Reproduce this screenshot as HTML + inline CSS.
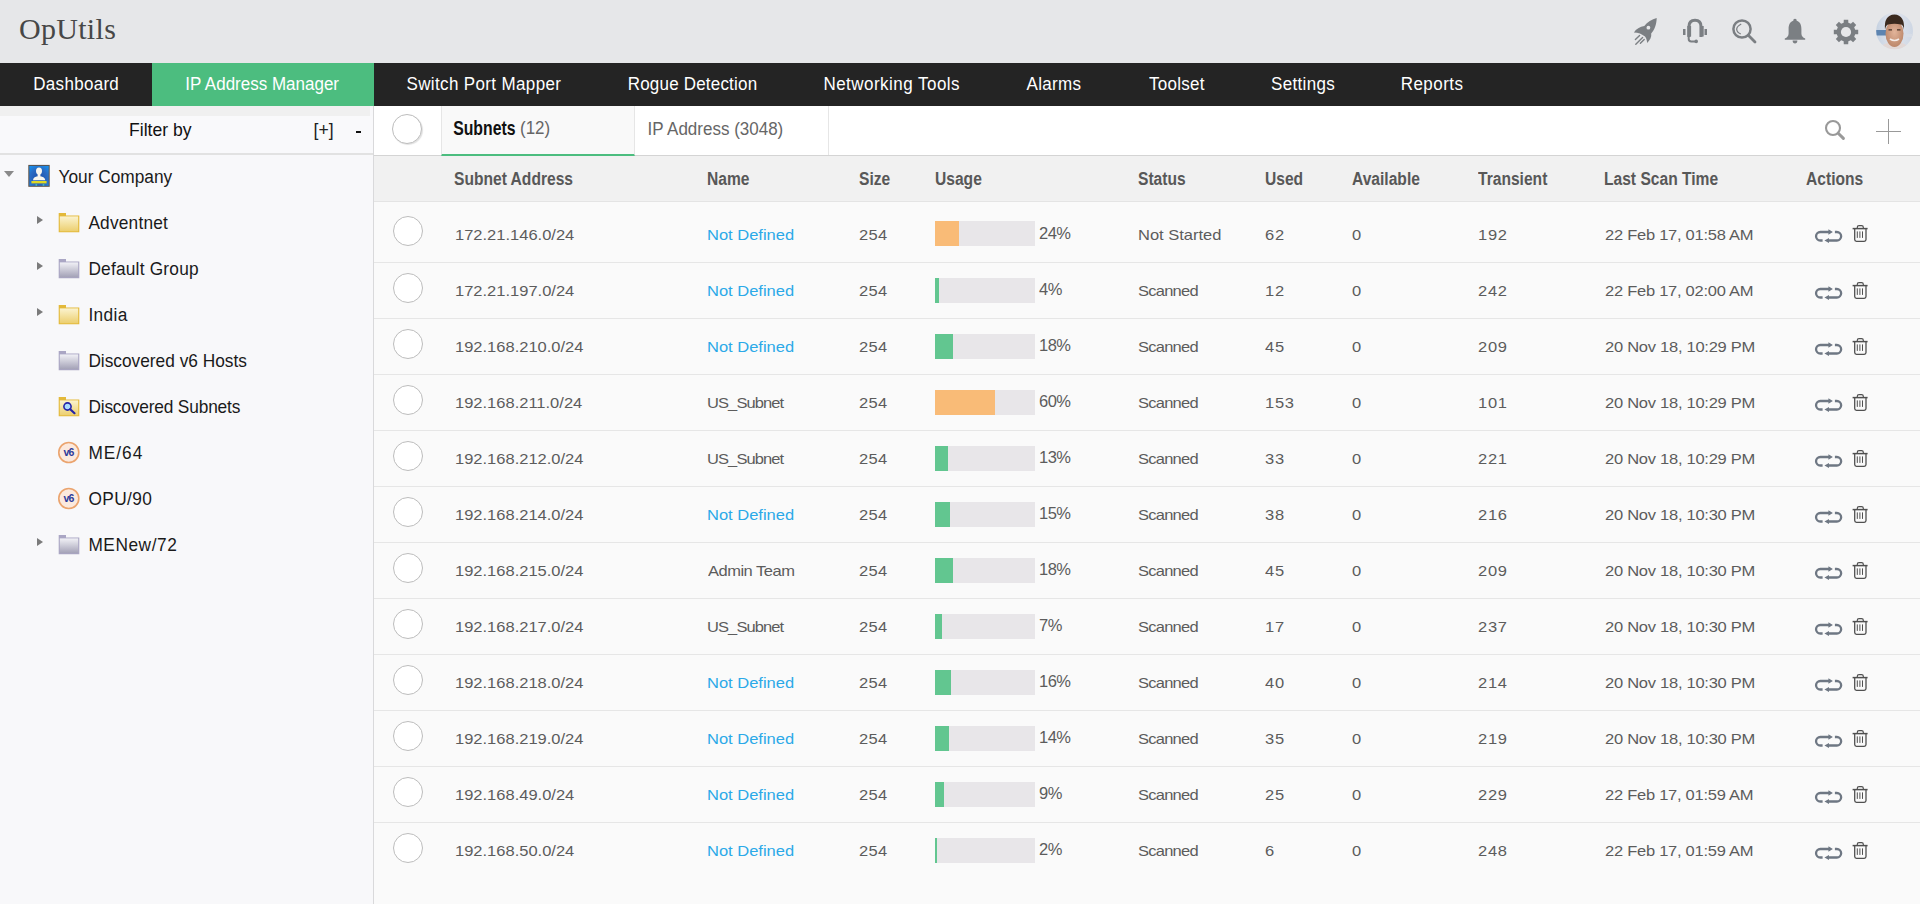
<!DOCTYPE html>
<html><head><meta charset="utf-8">
<style>
*{margin:0;padding:0;box-sizing:border-box}
html,body{width:1920px;height:904px;overflow:hidden;background:#fafafa;font-family:"Liberation Sans",sans-serif}
#top{position:absolute;left:0;top:0;width:1920px;height:63px;background:#e6e7e9}
#logo{position:absolute;left:19px;top:12px;font-family:"Liberation Serif",serif;font-size:30px;color:#474747;line-height:34px;white-space:nowrap;letter-spacing:0.3px}
#nav{position:absolute;left:0;top:63px;width:1920px;height:43px;background:#242424}
#nav .it{position:absolute;top:0;height:43px;color:#fff;font-size:17px;white-space:nowrap}
#nav .it span{position:absolute;left:0;top:10.3px;line-height:20px;transform:scaleY(1.125);transform-origin:0 0}
#nav .act span{left:33.3px}
#nav .act{background:#4cbd7f}
#side{position:absolute;left:0;top:106px;width:374px;height:798px;background:#f8f8fa;border-right:1px solid #d9d9db}
#strip{position:absolute;left:0;top:106px;width:370px;height:10px;background:#f0f0f0}
#filter{position:absolute;left:0;top:116px;width:373px;height:39px;background:#f9f9fb;border-bottom:2px solid #e2e2e2}
.st{position:absolute;font-size:17.6px;color:#111;white-space:nowrap;line-height:20px;transform:scaleY(1.05);transform-origin:0 0}
.tree{position:absolute;font-size:17.3px;color:#1a1a1a;white-space:nowrap;line-height:20px;transform:scaleY(1.08);transform-origin:0 0}
.tri{position:absolute;width:0;height:0;border-top:4.5px solid transparent;border-bottom:4.5px solid transparent;border-left:6px solid #7b7b7b}
.trid{position:absolute;width:0;height:0;border-left:5px solid transparent;border-right:5px solid transparent;border-top:6.5px solid #8a8a8a}
#tabs{position:absolute;left:374px;top:106px;width:1546px;height:50px;background:#fff;border-bottom:1px solid #d4d4d4}
#tab1{position:absolute;left:441px;top:106px;width:194px;height:50px;background:#f9f9f9;border-left:1px solid #e6e6e6;border-right:1px solid #e6e6e6;border-bottom:2px solid #4cbd7f}
#tab2b{position:absolute;left:828px;top:106px;width:1px;height:49px;background:#e6e6e6}
.tabt{position:absolute;font-size:17px;white-space:nowrap;line-height:20px;transform:scaleY(1.15);transform-origin:0 0}
#thead{position:absolute;left:374px;top:156px;width:1546px;height:46px;background:#f1f1f1;border-bottom:1px solid #e4e4e4}
.th{position:absolute;font-size:15.6px;font-weight:700;color:#585858;white-space:nowrap;line-height:20px;transform:scaleY(1.12);transform-origin:0 0}
.td{position:absolute;font-size:16.5px;color:#5c5c5c;white-space:nowrap;line-height:20px;transform:scaleY(0.94);transform-origin:0 16px}
.lnk{color:#2ba9e8}
.cb{position:absolute;width:30px;height:30px;border-radius:50%;border:1px solid #bdbdbd;background:#fff}
.bar{position:absolute;left:935px;width:100px;height:25px;background:#e8e6e9}
.bar i{position:absolute;left:0;top:0;height:25px;display:block}
.sep{position:absolute;left:374px;width:1546px;height:1px;background:#e6e6e6}
.ic{position:absolute;overflow:visible}
</style></head><body>
<svg width="0" height="0" style="position:absolute">
<defs>
 <symbol id="act" viewBox="0 0 64 32">
  <g fill="none" stroke="#6e7783" stroke-width="2.3">
   <path d="M14.6 22.5 H12.3 A4.25 4.25 0 0 1 12.3 14 H21"/>
   <path d="M26.9 14 H28.9 A4.25 4.25 0 0 1 28.9 22.5 H20.5"/>
  </g>
  <path d="M20.4 11.2 L24.9 14 L20.4 16.8 Z M21 20.1 L16.4 22.6 L21 25.1 Z" fill="#6e7783"/>
  <g fill="none" stroke="#505050">
   <path d="M49.3 10.3 V9.2 Q49.3 7.6 51 7.6 H53.6 Q55.3 7.6 55.3 9.2 V10.3" stroke-width="1.2"/>
   <path d="M44.6 10.6 H59.6" stroke-width="1.5"/>
   <path d="M46.7 10.8 V21.6 Q46.7 23.4 48.5 23.4 H56.2 Q58 23.4 58 21.6 V10.8" stroke-width="1.3"/>
   <path d="M49.3 13.4 V19.9 M51.9 13.4 V19.9 M54.5 13.4 V19.9" stroke-width="1"/>
  </g>
 </symbol>
 <linearGradient id="gy" x1="0" y1="0" x2="0" y2="1"><stop offset="0" stop-color="#fbf3cf"/><stop offset="1" stop-color="#eccf6f"/></linearGradient>
 <linearGradient id="gg" x1="0" y1="0" x2="0" y2="1"><stop offset="0" stop-color="#f1f1f6"/><stop offset="1" stop-color="#a3a1b6"/></linearGradient>
 <linearGradient id="gb" x1="0" y1="0" x2="0" y2="1"><stop offset="0" stop-color="#3d8be0"/><stop offset="1" stop-color="#1f5fb8"/></linearGradient>
 <symbol id="fy" viewBox="0 0 22 21">
  <path d="M0.7 20.3 V0.9 H8 V3.4 H21.3 V20.3 Z" fill="#e3b93a"/>
  <rect x="1.8" y="4.4" width="18.4" height="14.9" fill="url(#gy)"/>
 </symbol>
 <symbol id="fg" viewBox="0 0 22 21">
  <path d="M0.7 20.3 V0.9 H8 V3.4 H21.3 V20.3 Z" fill="#aaa6c4"/>
  <rect x="1.8" y="4.4" width="18.4" height="14.9" fill="url(#gg)"/>
 </symbol>
</defs></svg>
<div id="top"></div>
<div id="logo">OpUtils</div>
<svg class="ic" style="left:1630px;top:14px" width="32" height="34" viewBox="0 0 32 34">
 <path d="M26.7 4.1 C22 5.2 17.2 8.2 14.3 12 C10 12.6 6 15 3.9 18.4 C8 18.6 12.2 19.8 15 22.6 C16.6 24.6 17 27 17.1 28.9 C20 26.2 21.8 23 21.2 19.6 C24.5 16 26.6 10.5 26.7 4.1 Z" fill="#7b7f83"/>
 <circle cx="18.4" cy="13.7" r="1.9" fill="#e6e7e9"/>
 <path d="M9.6 21.4 L5.4 25.6 M12.6 23.4 L5.8 30.2 M14.2 25.4 L10.4 29.2" stroke="#7b7f83" stroke-width="1.4" stroke-linecap="round"/>
</svg>
<svg class="ic" style="left:1680px;top:16px" width="30" height="30" viewBox="0 0 30 30">
 <path d="M9 21 V10.5 Q9 4.3 15 4.3 Q21 4.3 21 10.5 V21" fill="none" stroke="#7b7f83" stroke-width="3"/>
 <rect x="3" y="13" width="2.5" height="6" fill="#7b7f83"/>
 <rect x="24.5" y="13" width="2.5" height="6" fill="#7b7f83"/>
 <rect x="7.3" y="10" width="3.8" height="10.5" fill="#7b7f83"/>
 <rect x="19.9" y="10" width="3.8" height="10.5" fill="#7b7f83"/>
 <path d="M8.7 20 V23 Q8.7 25.4 11.2 25.4 H15.5" fill="none" stroke="#7b7f83" stroke-width="2"/>
 <circle cx="16.2" cy="25.4" r="1.8" fill="#7b7f83"/>
</svg>
<svg class="ic" style="left:1730px;top:17px" width="30" height="30" viewBox="0 0 30 30">
 <circle cx="12" cy="12" r="8.6" fill="none" stroke="#7b7f83" stroke-width="2.5"/>
 <path d="M18.3 18.3 L25 25" stroke="#7b7f83" stroke-width="2.8" stroke-linecap="round"/>
 <path d="M11.2 7 Q6.5 9.5 6.7 12.5 Q7 15.5 10.8 17" fill="none" stroke="#7b7f83" stroke-width="1.3"/>
</svg>
<svg class="ic" style="left:1784px;top:18px" width="22" height="27" viewBox="0 0 22 27">
 <path d="M11 0.8 C12.3 0.8 12.7 1.8 12.7 2.7 C16.2 3.8 17.4 7 17.4 11 V15.5 C17.4 18 18.8 19.6 21.2 20.6 V21.8 H0.8 V20.6 C3.2 19.6 4.6 18 4.6 15.5 V11 C4.6 7 5.8 3.8 9.3 2.7 C9.3 1.8 9.7 0.8 11 0.8 Z" fill="#7b7f83"/>
 <path d="M8.6 22.6 H13.4 C13.4 24.6 12.4 25.4 11 25.4 C9.6 25.4 8.6 24.6 8.6 22.6 Z" fill="#7b7f83"/>
</svg>
<svg class="ic" style="left:1832px;top:18px" width="28" height="28" viewBox="-14 -14 28 28">
 <path d="M-2.35 -9.20 L-2.22 -12.20 L2.22 -12.20 L2.35 -9.20 L4.85 -8.17 L7.06 -10.20 L10.20 -7.06 L8.17 -4.85 L9.20 -2.35 L12.20 -2.22 L12.20 2.22 L9.20 2.35 L8.17 4.85 L10.20 7.06 L7.06 10.20 L4.85 8.17 L2.35 9.20 L2.22 12.20 L-2.22 12.20 L-2.35 9.20 L-4.85 8.17 L-7.06 10.20 L-10.20 7.06 L-8.17 4.85 L-9.20 2.35 L-12.20 2.22 L-12.20 -2.22 L-9.20 -2.35 L-8.17 -4.85 L-10.20 -7.06 L-7.06 -10.20 L-4.85 -8.17 Z" fill="#7b7f83"/>
 <circle cx="0" cy="0" r="5.1" fill="#e6e7e9"/>
</svg>
<svg class="ic" style="left:1875px;top:12px" width="39" height="39" viewBox="0 0 39 39">
 <defs>
  <clipPath id="av"><circle cx="19.6" cy="18.9" r="18.4"/></clipPath>
  <linearGradient id="avbg" x1="0" y1="0" x2="1" y2="0"><stop offset="0" stop-color="#c3d0e0"/><stop offset="0.45" stop-color="#e3e6ee"/><stop offset="1" stop-color="#cdd6e3"/></linearGradient>
  <radialGradient id="avf" cx="0.5" cy="0.45" r="0.6"><stop offset="0" stop-color="#e2b49a"/><stop offset="1" stop-color="#b98366"/></radialGradient>
 </defs>
 <g clip-path="url(#av)">
  <rect width="39" height="39" fill="url(#avbg)"/>
  <rect x="0" y="18" width="11" height="5.5" fill="#5d84b0"/>
  <rect x="27" y="22" width="12" height="3" fill="#d8dde6"/>
  <path d="M4 39 Q6 30 19.5 30 Q33 30 35 39 Z" fill="#e2d8d6"/>
  <ellipse cx="19.5" cy="21.5" rx="9" ry="13.5" fill="url(#avf)"/>
  <path d="M10 18 Q8.5 3 19.5 2.5 Q30 3 29 18 Q28.5 13 26 12.5 Q19.5 11 13 12.5 Q10.5 13.5 10 18 Z" fill="#3b2a1f"/>
  <path d="M13.5 17.8 H17 M22 17.8 H25.5" stroke="#4a3528" stroke-width="1.3"/>
  <path d="M15 27 Q19.5 30 24 27" stroke="#f4ece8" stroke-width="1.6" fill="none"/>
 </g>
</svg>
<div id="nav">
<div class="it" style="left:0;width:152px"><span style="left:33.3px;letter-spacing:0.29px">Dashboard</span></div>
<div class="it act" style="left:152px;width:222px"><span>IP Address Manager</span></div>
<div class="it" style="left:406.5px"><span style="letter-spacing:0.36px">Switch Port Mapper</span></div>
<div class="it" style="left:627.7px"><span style="letter-spacing:0.2px">Rogue Detection</span></div>
<div class="it" style="left:823.4px"><span style="letter-spacing:0.47px">Networking Tools</span></div>
<div class="it" style="left:1026.6px"><span style="letter-spacing:0.28px">Alarms</span></div>
<div class="it" style="left:1149px"><span style="letter-spacing:0.27px">Toolset</span></div>
<div class="it" style="left:1271px"><span style="letter-spacing:0.34px">Settings</span></div>
<div class="it" style="left:1400.7px"><span style="letter-spacing:0.45px">Reports</span></div>
</div>
<div id="side"></div><div id="strip"></div><div id="filter"></div>
<div class="st" style="left:129px;top:119px">Filter by</div>
<div class="st" style="left:313.5px;top:119px;color:#222">[+]</div>
<div style="position:absolute;left:355.5px;top:131px;width:5.5px;height:2px;background:#111"></div>
<div class="trid" style="left:4px;top:171px"></div>
<svg class="ic" style="left:27px;top:164px" width="24" height="24" viewBox="0 0 24 24">
 <defs><radialGradient id="gbr" cx="0.5" cy="0.6" r="0.75"><stop offset="0" stop-color="#1d4fa8"/><stop offset="0.6" stop-color="#2a6cc4"/><stop offset="1" stop-color="#1592f0"/></radialGradient></defs>
 <rect x="1.3" y="0.9" width="21.4" height="21.9" fill="#5b5048"/>
 <rect x="2.3" y="1.9" width="19.4" height="19.9" fill="url(#gbr)"/>
 <ellipse cx="12" cy="7.1" rx="3" ry="3.5" fill="#f8f6ee"/>
 <rect x="10.6" y="9" width="2.8" height="4" fill="#f8f6ee"/>
 <path d="M6 16.2 Q6.3 12.4 12 12.2 Q17.7 12.4 18.3 16.2 Z" fill="#f8f6ee"/>
 <rect x="4.4" y="17" width="15.2" height="2.4" fill="#e0d820"/>
 <rect x="8.5" y="20" width="1.6" height="1.8" fill="#48b8b0"/><rect x="15.7" y="20" width="1.6" height="1.8" fill="#48b8b0"/>
</svg>
<div class="tree" style="left:58.5px;top:165.5px">Your Company</div>
<div class="tri" style="left:37px;top:216px"></div>
<svg class="ic" style="left:58px;top:212px" width="22" height="21"><use href="#fy"/></svg>
<div class="tree" style="left:88.4px;top:211.5px;letter-spacing:0.2px">Adventnet</div>
<div class="tri" style="left:37px;top:262px"></div>
<svg class="ic" style="left:58px;top:258px" width="22" height="21"><use href="#fg"/></svg>
<div class="tree" style="left:88.4px;top:257.5px;letter-spacing:0.22px">Default Group</div>
<div class="tri" style="left:37px;top:308px"></div>
<svg class="ic" style="left:58px;top:304px" width="22" height="21"><use href="#fy"/></svg>
<div class="tree" style="left:88.4px;top:303.5px;letter-spacing:0.4px">India</div>
<svg class="ic" style="left:58px;top:350px" width="22" height="21"><use href="#fg"/></svg>
<div class="tree" style="left:88.4px;top:349.5px;letter-spacing:0px">Discovered v6 Hosts</div>
<svg class="ic" style="left:58px;top:396px" width="22" height="21" viewBox="0 0 22 21">
 <use href="#fy"/>
 <circle cx="9.5" cy="10.5" r="3.6" fill="#a8dcff" stroke="#2424a8" stroke-width="1.6"/>
 <path d="M12.2 13.2 L16.5 17.2" stroke="#2424a8" stroke-width="2.2" stroke-linecap="round"/>
</svg>
<div class="tree" style="left:88.4px;top:395.5px;letter-spacing:-0.16px">Discovered Subnets</div>
<svg class="ic" style="left:57px;top:441px" width="23" height="23" viewBox="0 0 23 23">
 <circle cx="11.8" cy="11.5" r="10" fill="#fbe9de" stroke="#eba46e" stroke-width="1.6"/>
 <text x="11.6" y="15.2" font-family="Liberation Sans" font-size="10.5" font-weight="700" fill="#2b3a9a" text-anchor="middle" letter-spacing="-0.8">v6</text>
</svg>
<div class="tree" style="left:88.4px;top:441.5px;letter-spacing:1.0px">ME/64</div>
<svg class="ic" style="left:57px;top:487px" width="23" height="23" viewBox="0 0 23 23">
 <circle cx="11.8" cy="11.5" r="10" fill="#fbe9de" stroke="#eba46e" stroke-width="1.6"/>
 <text x="11.6" y="15.2" font-family="Liberation Sans" font-size="10.5" font-weight="700" fill="#2b3a9a" text-anchor="middle" letter-spacing="-0.8">v6</text>
</svg>
<div class="tree" style="left:88.4px;top:487.5px;letter-spacing:0.4px">OPU/90</div>
<div class="tri" style="left:37px;top:538px"></div>
<svg class="ic" style="left:58px;top:534px" width="22" height="21"><use href="#fg"/></svg>
<div class="tree" style="left:88.4px;top:533.5px;letter-spacing:0.55px">MENew/72</div>
<div id="tabs"></div><div id="tab1"></div><div id="tab2b"></div>
<div class="cb" style="left:392px;top:114px;box-shadow:1px 1px 1px rgba(0,0,0,0.12)"></div>
<div class="tabt" style="left:453.2px;top:115.6px;font-weight:700;font-size:15.8px;color:#111;transform:scaleY(1.28)">Subnets</div>
<div class="tabt" style="left:520px;top:116.8px;color:#666;transform:scaleY(1.12)">(12)</div>
<div class="tabt" style="left:647.5px;top:118px;color:#666;transform:scaleY(1.1)">IP Address (3048)</div>
<svg class="ic" style="left:1820px;top:115px" width="30" height="30" viewBox="0 0 30 30">
 <circle cx="13" cy="13" r="7" fill="none" stroke="#999" stroke-width="2.1"/>
 <path d="M18.2 18.2 L23.4 23.4" stroke="#999" stroke-width="3" stroke-linecap="round"/>
</svg>
<div style="position:absolute;left:1888px;top:119px;width:1px;height:25px;background:#999"></div>
<div style="position:absolute;left:1876px;top:131px;width:25px;height:1px;background:#999"></div>
<div id="thead"></div>
<div class="th" style="left:454px;top:167.7px">Subnet Address</div>
<div class="th" style="left:707px;top:167.7px">Name</div>
<div class="th" style="left:859px;top:167.7px">Size</div>
<div class="th" style="left:935px;top:167.7px">Usage</div>
<div class="th" style="left:1138px;top:167.7px">Status</div>
<div class="th" style="left:1265px;top:167.7px">Used</div>
<div class="th" style="left:1352px;top:167.7px">Available</div>
<div class="th" style="left:1478px;top:167.7px">Transient</div>
<div class="th" style="left:1604px;top:167.7px">Last Scan Time</div>
<div class="th" style="left:1806px;top:167.7px">Actions</div>
<div class="sep" style="top:262px"></div>
<div class="cb" style="left:393px;top:216px"></div>
<div class="td" style="left:455px;top:224px">172.21.146.0/24</div>
<div class="td lnk" style="left:707px;top:224px;letter-spacing:0px">Not Defined</div>
<div class="td" style="left:859px;top:224px;letter-spacing:0.3px">254</div>
<div class="bar" style="top:221px"><i style="width:24px;background:#f9bb77"></i></div>
<div class="td" style="left:1039px;top:223.1px;letter-spacing:-0.5px;transform:scaleY(1.0)">24%</div>
<div class="td" style="left:1138px;top:224px;letter-spacing:0px">Not Started</div>
<div class="td" style="left:1265px;top:224px;letter-spacing:0.7px">62</div>
<div class="td" style="left:1352px;top:224px;letter-spacing:0.7px">0</div>
<div class="td" style="left:1478px;top:224px;letter-spacing:0.7px">192</div>
<div class="td" style="left:1605px;top:224px;letter-spacing:-0.26px">22 Feb 17, 01:58 AM</div>
<svg class="ic" style="left:1808px;top:218px" width="64" height="32"><use href="#act"/></svg>
<div class="sep" style="top:318px"></div>
<div class="cb" style="left:393px;top:273px"></div>
<div class="td" style="left:455px;top:280px">172.21.197.0/24</div>
<div class="td lnk" style="left:707px;top:280px;letter-spacing:0px">Not Defined</div>
<div class="td" style="left:859px;top:280px;letter-spacing:0.3px">254</div>
<div class="bar" style="top:278px"><i style="width:4px;background:#62c690"></i></div>
<div class="td" style="left:1039px;top:279.1px;letter-spacing:-0.5px;transform:scaleY(1.0)">4%</div>
<div class="td" style="left:1138px;top:280px;letter-spacing:-0.75px">Scanned</div>
<div class="td" style="left:1265px;top:280px;letter-spacing:0.7px">12</div>
<div class="td" style="left:1352px;top:280px;letter-spacing:0.7px">0</div>
<div class="td" style="left:1478px;top:280px;letter-spacing:0.7px">242</div>
<div class="td" style="left:1605px;top:280px;letter-spacing:-0.26px">22 Feb 17, 02:00 AM</div>
<svg class="ic" style="left:1808px;top:275px" width="64" height="32"><use href="#act"/></svg>
<div class="sep" style="top:374px"></div>
<div class="cb" style="left:393px;top:329px"></div>
<div class="td" style="left:455px;top:336px">192.168.210.0/24</div>
<div class="td lnk" style="left:707px;top:336px;letter-spacing:0px">Not Defined</div>
<div class="td" style="left:859px;top:336px;letter-spacing:0.3px">254</div>
<div class="bar" style="top:334px"><i style="width:18px;background:#62c690"></i></div>
<div class="td" style="left:1039px;top:335.1px;letter-spacing:-0.5px;transform:scaleY(1.0)">18%</div>
<div class="td" style="left:1138px;top:336px;letter-spacing:-0.75px">Scanned</div>
<div class="td" style="left:1265px;top:336px;letter-spacing:0.7px">45</div>
<div class="td" style="left:1352px;top:336px;letter-spacing:0.7px">0</div>
<div class="td" style="left:1478px;top:336px;letter-spacing:0.7px">209</div>
<div class="td" style="left:1605px;top:336px;letter-spacing:-0.26px">20 Nov 18, 10:29 PM</div>
<svg class="ic" style="left:1808px;top:331px" width="64" height="32"><use href="#act"/></svg>
<div class="sep" style="top:430px"></div>
<div class="cb" style="left:393px;top:385px"></div>
<div class="td" style="left:455px;top:392px">192.168.211.0/24</div>
<div class="td" style="left:707px;top:392px;letter-spacing:-0.9px">US_Subnet</div>
<div class="td" style="left:859px;top:392px;letter-spacing:0.3px">254</div>
<div class="bar" style="top:390px"><i style="width:60px;background:#f9bb77"></i></div>
<div class="td" style="left:1039px;top:391.1px;letter-spacing:-0.5px;transform:scaleY(1.0)">60%</div>
<div class="td" style="left:1138px;top:392px;letter-spacing:-0.75px">Scanned</div>
<div class="td" style="left:1265px;top:392px;letter-spacing:0.7px">153</div>
<div class="td" style="left:1352px;top:392px;letter-spacing:0.7px">0</div>
<div class="td" style="left:1478px;top:392px;letter-spacing:0.7px">101</div>
<div class="td" style="left:1605px;top:392px;letter-spacing:-0.26px">20 Nov 18, 10:29 PM</div>
<svg class="ic" style="left:1808px;top:387px" width="64" height="32"><use href="#act"/></svg>
<div class="sep" style="top:486px"></div>
<div class="cb" style="left:393px;top:441px"></div>
<div class="td" style="left:455px;top:448px">192.168.212.0/24</div>
<div class="td" style="left:707px;top:448px;letter-spacing:-0.9px">US_Subnet</div>
<div class="td" style="left:859px;top:448px;letter-spacing:0.3px">254</div>
<div class="bar" style="top:446px"><i style="width:13px;background:#62c690"></i></div>
<div class="td" style="left:1039px;top:447.1px;letter-spacing:-0.5px;transform:scaleY(1.0)">13%</div>
<div class="td" style="left:1138px;top:448px;letter-spacing:-0.75px">Scanned</div>
<div class="td" style="left:1265px;top:448px;letter-spacing:0.7px">33</div>
<div class="td" style="left:1352px;top:448px;letter-spacing:0.7px">0</div>
<div class="td" style="left:1478px;top:448px;letter-spacing:0.7px">221</div>
<div class="td" style="left:1605px;top:448px;letter-spacing:-0.26px">20 Nov 18, 10:29 PM</div>
<svg class="ic" style="left:1808px;top:443px" width="64" height="32"><use href="#act"/></svg>
<div class="sep" style="top:542px"></div>
<div class="cb" style="left:393px;top:497px"></div>
<div class="td" style="left:455px;top:504px">192.168.214.0/24</div>
<div class="td lnk" style="left:707px;top:504px;letter-spacing:0px">Not Defined</div>
<div class="td" style="left:859px;top:504px;letter-spacing:0.3px">254</div>
<div class="bar" style="top:502px"><i style="width:15px;background:#62c690"></i></div>
<div class="td" style="left:1039px;top:503.1px;letter-spacing:-0.5px;transform:scaleY(1.0)">15%</div>
<div class="td" style="left:1138px;top:504px;letter-spacing:-0.75px">Scanned</div>
<div class="td" style="left:1265px;top:504px;letter-spacing:0.7px">38</div>
<div class="td" style="left:1352px;top:504px;letter-spacing:0.7px">0</div>
<div class="td" style="left:1478px;top:504px;letter-spacing:0.7px">216</div>
<div class="td" style="left:1605px;top:504px;letter-spacing:-0.26px">20 Nov 18, 10:30 PM</div>
<svg class="ic" style="left:1808px;top:499px" width="64" height="32"><use href="#act"/></svg>
<div class="sep" style="top:598px"></div>
<div class="cb" style="left:393px;top:553px"></div>
<div class="td" style="left:455px;top:560px">192.168.215.0/24</div>
<div class="td" style="left:708px;top:560px;letter-spacing:-0.5px">Admin Team</div>
<div class="td" style="left:859px;top:560px;letter-spacing:0.3px">254</div>
<div class="bar" style="top:558px"><i style="width:18px;background:#62c690"></i></div>
<div class="td" style="left:1039px;top:559.1px;letter-spacing:-0.5px;transform:scaleY(1.0)">18%</div>
<div class="td" style="left:1138px;top:560px;letter-spacing:-0.75px">Scanned</div>
<div class="td" style="left:1265px;top:560px;letter-spacing:0.7px">45</div>
<div class="td" style="left:1352px;top:560px;letter-spacing:0.7px">0</div>
<div class="td" style="left:1478px;top:560px;letter-spacing:0.7px">209</div>
<div class="td" style="left:1605px;top:560px;letter-spacing:-0.26px">20 Nov 18, 10:30 PM</div>
<svg class="ic" style="left:1808px;top:555px" width="64" height="32"><use href="#act"/></svg>
<div class="sep" style="top:654px"></div>
<div class="cb" style="left:393px;top:609px"></div>
<div class="td" style="left:455px;top:616px">192.168.217.0/24</div>
<div class="td" style="left:707px;top:616px;letter-spacing:-0.9px">US_Subnet</div>
<div class="td" style="left:859px;top:616px;letter-spacing:0.3px">254</div>
<div class="bar" style="top:614px"><i style="width:7px;background:#62c690"></i></div>
<div class="td" style="left:1039px;top:615.1px;letter-spacing:-0.5px;transform:scaleY(1.0)">7%</div>
<div class="td" style="left:1138px;top:616px;letter-spacing:-0.75px">Scanned</div>
<div class="td" style="left:1265px;top:616px;letter-spacing:0.7px">17</div>
<div class="td" style="left:1352px;top:616px;letter-spacing:0.7px">0</div>
<div class="td" style="left:1478px;top:616px;letter-spacing:0.7px">237</div>
<div class="td" style="left:1605px;top:616px;letter-spacing:-0.26px">20 Nov 18, 10:30 PM</div>
<svg class="ic" style="left:1808px;top:611px" width="64" height="32"><use href="#act"/></svg>
<div class="sep" style="top:710px"></div>
<div class="cb" style="left:393px;top:665px"></div>
<div class="td" style="left:455px;top:672px">192.168.218.0/24</div>
<div class="td lnk" style="left:707px;top:672px;letter-spacing:0px">Not Defined</div>
<div class="td" style="left:859px;top:672px;letter-spacing:0.3px">254</div>
<div class="bar" style="top:670px"><i style="width:16px;background:#62c690"></i></div>
<div class="td" style="left:1039px;top:671.1px;letter-spacing:-0.5px;transform:scaleY(1.0)">16%</div>
<div class="td" style="left:1138px;top:672px;letter-spacing:-0.75px">Scanned</div>
<div class="td" style="left:1265px;top:672px;letter-spacing:0.7px">40</div>
<div class="td" style="left:1352px;top:672px;letter-spacing:0.7px">0</div>
<div class="td" style="left:1478px;top:672px;letter-spacing:0.7px">214</div>
<div class="td" style="left:1605px;top:672px;letter-spacing:-0.26px">20 Nov 18, 10:30 PM</div>
<svg class="ic" style="left:1808px;top:667px" width="64" height="32"><use href="#act"/></svg>
<div class="sep" style="top:766px"></div>
<div class="cb" style="left:393px;top:721px"></div>
<div class="td" style="left:455px;top:728px">192.168.219.0/24</div>
<div class="td lnk" style="left:707px;top:728px;letter-spacing:0px">Not Defined</div>
<div class="td" style="left:859px;top:728px;letter-spacing:0.3px">254</div>
<div class="bar" style="top:726px"><i style="width:14px;background:#62c690"></i></div>
<div class="td" style="left:1039px;top:727.1px;letter-spacing:-0.5px;transform:scaleY(1.0)">14%</div>
<div class="td" style="left:1138px;top:728px;letter-spacing:-0.75px">Scanned</div>
<div class="td" style="left:1265px;top:728px;letter-spacing:0.7px">35</div>
<div class="td" style="left:1352px;top:728px;letter-spacing:0.7px">0</div>
<div class="td" style="left:1478px;top:728px;letter-spacing:0.7px">219</div>
<div class="td" style="left:1605px;top:728px;letter-spacing:-0.26px">20 Nov 18, 10:30 PM</div>
<svg class="ic" style="left:1808px;top:723px" width="64" height="32"><use href="#act"/></svg>
<div class="sep" style="top:822px"></div>
<div class="cb" style="left:393px;top:777px"></div>
<div class="td" style="left:455px;top:784px">192.168.49.0/24</div>
<div class="td lnk" style="left:707px;top:784px;letter-spacing:0px">Not Defined</div>
<div class="td" style="left:859px;top:784px;letter-spacing:0.3px">254</div>
<div class="bar" style="top:782px"><i style="width:9px;background:#62c690"></i></div>
<div class="td" style="left:1039px;top:783.1px;letter-spacing:-0.5px;transform:scaleY(1.0)">9%</div>
<div class="td" style="left:1138px;top:784px;letter-spacing:-0.75px">Scanned</div>
<div class="td" style="left:1265px;top:784px;letter-spacing:0.7px">25</div>
<div class="td" style="left:1352px;top:784px;letter-spacing:0.7px">0</div>
<div class="td" style="left:1478px;top:784px;letter-spacing:0.7px">229</div>
<div class="td" style="left:1605px;top:784px;letter-spacing:-0.26px">22 Feb 17, 01:59 AM</div>
<svg class="ic" style="left:1808px;top:779px" width="64" height="32"><use href="#act"/></svg>
<div class="cb" style="left:393px;top:833px"></div>
<div class="td" style="left:455px;top:840px">192.168.50.0/24</div>
<div class="td lnk" style="left:707px;top:840px;letter-spacing:0px">Not Defined</div>
<div class="td" style="left:859px;top:840px;letter-spacing:0.3px">254</div>
<div class="bar" style="top:838px"><i style="width:2px;background:#62c690"></i></div>
<div class="td" style="left:1039px;top:839.1px;letter-spacing:-0.5px;transform:scaleY(1.0)">2%</div>
<div class="td" style="left:1138px;top:840px;letter-spacing:-0.75px">Scanned</div>
<div class="td" style="left:1265px;top:840px;letter-spacing:0.7px">6</div>
<div class="td" style="left:1352px;top:840px;letter-spacing:0.7px">0</div>
<div class="td" style="left:1478px;top:840px;letter-spacing:0.7px">248</div>
<div class="td" style="left:1605px;top:840px;letter-spacing:-0.26px">22 Feb 17, 01:59 AM</div>
<svg class="ic" style="left:1808px;top:835px" width="64" height="32"><use href="#act"/></svg>
</body></html>
